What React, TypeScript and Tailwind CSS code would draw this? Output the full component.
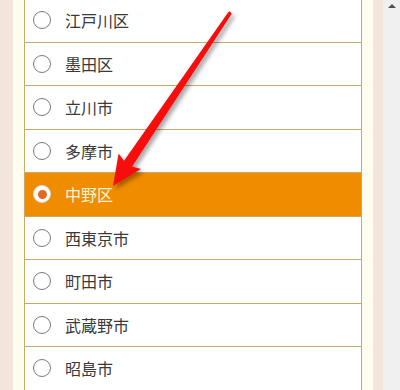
import React from 'react'

const CITIES = ['江戸川区', '墨田区', '立川市', '多摩市', '中野区', '西東京市', '町田市', '武蔵野市', '昭島市']
const SELECTED = '中野区'

function Radio({ checked }: { checked: boolean }) {
  if (checked) {
    return (
      <span className="flex h-[18px] w-[18px] shrink-0 items-center justify-center rounded-full border border-[#d9d9d9] bg-white">
        <span className="h-[9px] w-[9px] rounded-full bg-[#e06a22]" />
      </span>
    )
  }
  return <span className="h-[18px] w-[18px] shrink-0 rounded-full border border-[#7a7a7a] bg-white" />
}

function Arrow() {
  return (
    <svg className="pointer-events-none absolute inset-0" width="400" height="390" viewBox="0 0 400 390">
      <defs>
        <filter id="sh" x="-20%" y="-20%" width="140%" height="140%">
          <feDropShadow dx="3" dy="3" stdDeviation="2.2" floodColor="#000" floodOpacity="0.35" />
        </filter>
      </defs>
      <path
        d="M231.6 14.1 L132.2 166.4 L141 169 L113 186 L118.6 153.5 L124 160.8 L228.4 11.9 Q230.8 10.4 231.6 14.1 Z"
        fill="#f80d0d"
        filter="url(#sh)"
      />
    </svg>
  )
}

export default function App() {
  return (
    <div className="relative flex h-[390px] w-[400px] overflow-hidden bg-white font-['Noto_Sans_CJK_JP','Noto_Sans',sans-serif]">
      <div className="w-[13px] shrink-0 bg-[#f3e5dc]" />
      <div className="w-[11px] shrink-0 bg-[#fffcf0]" />
      <div className="-mt-px flex w-[338px] shrink-0 flex-col border-x border-[#c8aa62] bg-white">
        {CITIES.map((c) => {
          const on = c === SELECTED
          return (
            <div
              key={c}
              className={`flex h-[43.5px] shrink-0 items-center gap-[14px] border-b border-[#c8aa62] pl-2 text-[16px] ${
                on ? 'bg-[#f08c00] text-[#fff4d4]' : 'bg-white text-[#3a3a3a]'
              }`}
            >
              <Radio checked={on} />
              <span>{c}</span>
            </div>
          )
        })}
      </div>
      <div className="w-[11px] shrink-0 bg-[#fffcf0]" />
      <div className="w-[10px] shrink-0 bg-[#f3e5dc]" />
      <div className="flex w-[17px] shrink-0 justify-center bg-[#f0f0f0] pt-[4px]">
        <span className="h-0 w-0 border-x-[4px] border-b-[4px] border-x-transparent border-b-[#505050]" />
      </div>
      <Arrow />
    </div>
  )
}
